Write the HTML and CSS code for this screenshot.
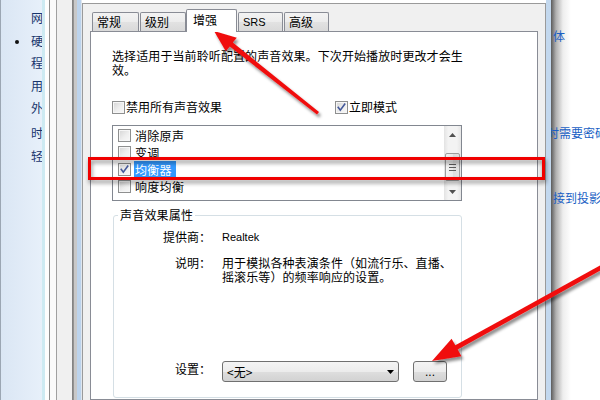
FILE: index.html
```html
<!DOCTYPE html>
<html lang="zh-CN">
<head>
<meta charset="utf-8">
<title>声音属性 - 增强</title>
<link rel="stylesheet" href="styles.css">
</head>
<body>
<div class="screen">
  <aside class="sidebar">
    <ul class="nav">
      <li>网络和 Internet</li>
      <li class="current">硬件和声音</li>
      <li>程序</li>
      <li>用户帐户和家庭安全</li>
      <li>外观和个性化</li>
      <li class="gap">时钟、语言和区域</li>
      <li>轻松访问</li>
    </ul>
  </aside>
  <div class="chrome-left"></div>
  <section class="dialog">
    <div class="tabs">
      <div class="tab t1">常规</div>
      <div class="tab t2">级别</div>
      <div class="tab active">增强</div>
      <div class="tab t4 latin">SRS</div>
      <div class="tab t5">高级</div>
    </div>
    <div class="panel">
      <p class="intro">选择适用于当前聆听配置的声音效果。下次开始播放时更改才会生<br>效。</p>
      <div class="checks">
        <label class="check"><span class="box"></span>禁用所有声音效果</label>
        <label class="check"><span class="box"><svg class="tick" viewBox="0 0 11 11" width="11" height="11"><path d="M1.8 4.8 L4.3 8.2 L9.2 1.6" fill="none" stroke="#43589a" stroke-width="1.6"/></svg></span>立即模式</label>
      </div>
      <div class="listbox">
        <ul class="items">
          <li><span class="box"></span><span class="label">消除原声</span></li>
          <li><span class="box"></span><span class="label">变调</span></li>
          <li class="selected"><span class="box"><svg class="tick" viewBox="0 0 11 11" width="11" height="11"><path d="M1.8 4.8 L4.3 8.2 L9.2 1.6" fill="none" stroke="#43589a" stroke-width="1.6"/></svg></span><span class="label">均衡器</span></li>
          <li><span class="box"></span><span class="label">响度均衡</span></li>
        </ul>
        <div class="scrollbar">
          <div class="sb-btn"><svg width="7" height="4" viewBox="0 0 7 4"><path d="M0 4 L3.5 0 L7 4Z" fill="#505050"/></svg></div>
          <div class="sb-track">
            <div class="sb-thumb"><svg width="7" height="7" viewBox="0 0 7 7"><rect x="0" y="0" width="7" height="1" fill="#5c5c5c"/><rect x="0" y="3" width="7" height="1" fill="#5c5c5c"/><rect x="0" y="6" width="7" height="1" fill="#5c5c5c"/></svg></div>
          </div>
          <div class="sb-btn"><svg width="7" height="4" viewBox="0 0 7 4"><path d="M0 0 L7 0 L3.5 4Z" fill="#505050"/></svg></div>
        </div>
      </div>
      <fieldset class="group">
        <legend>声音效果属性</legend>
        <div class="prop">
          <span class="key">提供商：</span>
          <span class="val latin">Realtek</span>
        </div>
        <div class="prop desc">
          <span class="key">说明：</span>
          <span class="val">用于模拟各种表演条件（如流行乐、直播、摇滚乐等）的频率响应的设置。</span>
        </div>
        <div class="prop setting">
          <span class="key">设置：</span>
          <div class="controls">
            <div class="combo"><span>&lt;无&gt;</span><svg width="7" height="4" viewBox="0 0 7 4"><path d="M0 0 L7 0 L3.5 4Z" fill="#000"/></svg></div>
            <button class="more latin" type="button">...</button>
          </div>
        </div>
      </fieldset>
    </div>
  </section>
  <div class="chrome-right"></div>
  <div class="page">
    <span class="link l1">体</span>
    <span class="link l2">时需要密码</span>
    <span class="link l3">接到投影仪</span>
  </div>
  <div class="highlight"></div>
  <svg class="arrows" width="600" height="400" viewBox="0 0 600 400">
    <defs>
      <filter id="sh" x="-20%" y="-20%" width="140%" height="140%">
        <feDropShadow dx="2" dy="3" stdDeviation="1.6" flood-color="#000" flood-opacity="0.45"/>
      </filter>
    </defs>
    <polygon filter="url(#sh)" fill="#f01010" points="319,112 232.8,42.6 236.8,37.8 214,31 225.8,51.3 229.8,46.6 317,114.5"/>
    <polygon filter="url(#sh)" fill="#f01010" points="611,264.5 457.7,349.6 461.4,356.2 432,361 451.6,338.8 455.3,345.3 609,260.5"/>
  </svg>
</div>
</body>
</html>
```

FILE: styles.css
```css
* { box-sizing: border-box; }
html, body { margin: 0; padding: 0; }
body {
  width: 600px;
  height: 400px;
  overflow: hidden;
  background: #fff;
  font-family: "Noto Sans CJK SC", "Noto Sans", sans-serif;
  font-size: 12px;
  color: #000;
}
.latin { font-family: "Liberation Sans", Arial, sans-serif; }

.screen {
  position: relative;
  display: flex;
  width: 600px;
  height: 400px;
  overflow: hidden;
  background: #fff;
}

/* left control panel pane */
.sidebar {
  flex: none;
  width: 42px;
  overflow: hidden;
  border-left: 1px solid #9ba6b3;
  background: linear-gradient(to right, #dae6f4, #e7f0fa);
}
.nav {
  list-style: none;
  margin: 0;
  padding: 7px 0 0 30px;
  white-space: nowrap;
  color: #17356c;
  line-height: 22.5px;
}
.nav .current::before {
  content: "";
  display: inline-block;
  width: 4px;
  height: 4px;
  border-radius: 50%;
  background: #111;
  margin-left: -16px;
  margin-right: 12px;
  vertical-align: middle;
}
.nav .gap { margin-top: 2.5px; }

.chrome-left {
  flex: none;
  width: 40px;
  background: linear-gradient(to right,
    #cdeaf2 0, #cdeaf2 3px,
    #fdfdfd 3px, #fdfdfd 7px,
    #8d8d8d 7px, #8d8d8d 8px,
    #fafafa 8px, #fafafa 14px,
    #a0a0a0 14px, #a0a0a0 15px,
    #f0f0f0 15px, #f0f0f0 30px,
    #7c7c7c 30px, #9a9a9a 32px,
    #c8c8c8 32px, #c8c8c8 35px,
    #bcd3ec 35px, #bcd3ec 39px,
    #dfe6ee 39px, #dfe6ee 40px);
}

/* dialog */
.dialog {
  flex: none;
  width: 464px;
  margin-top: 3px;
  border: 1px solid #9a9a9a;
  border-bottom: 0;
  background: #f0f0f0;
  padding: 5px 7px 0;
  display: flex;
  flex-direction: column;
}
.tabs {
  position: relative;
  z-index: 1;
  display: flex;
  align-items: flex-end;
  height: 22px;
  padding-left: 2px;
}
.tab {
  flex: none;
  height: 19px;
  margin-right: 1px;
  padding-left: 4px;
  line-height: 18px;
  border: 1px solid #898c95;
  border-bottom: 0;
  border-radius: 2px 2px 0 0;
  background: linear-gradient(#f3f3f3, #ececec 50%, #e2e2e2 51%, #d9d9d9);
  white-space: nowrap;
  overflow: hidden;
}
.t1 { width: 47px; }
.t2 { width: 46px; }
.t4 { width: 45px; font-size: 11px; }
.t5 { width: 45px; }
.tab.active {
  width: 51px;
  height: 23px;
  margin-left: -1px;
  margin-bottom: -1px;
  padding-left: 6px;
  line-height: 20px;
  background: #fff;
}

.panel {
  flex: 1;
  background: #fff;
  border: 1px solid #898c95;
  padding: 17px 0 0 21px;
}
.intro {
  margin: 0;
  width: 400px;
  line-height: 14px;
  letter-spacing: 0.1px;
  white-space: nowrap;
}

.checks {
  display: grid;
  grid-template-columns: 223px auto;
  margin-top: 22px;
  height: 16px;
  align-items: center;
}
.check {
  display: flex;
  align-items: center;
  line-height: 16px;
}
.box {
  flex: none;
  display: flex;
  align-items: center;
  justify-content: center;
  width: 13px;
  height: 13px;
  margin-right: 1px;
  border: 1px solid #8e8f8f;
  background: linear-gradient(135deg, #d4d4d4 0%, #eeeeee 55%, #f8f8f8 100%);
  box-shadow: inset 0 0 0 1px #f6f6f6;
}

.listbox {
  margin-top: 10px;
  width: 350px;
  height: 76px;
  border: 1px solid #828790;
  display: flex;
}
.items {
  flex: 1;
  list-style: none;
  margin: 0;
  padding: 1px 0 0 5px;
}
.items li {
  display: flex;
  align-items: center;
  height: 17px;
}
.items .box { margin-right: 3px; }
.items .label {
  padding: 0 4px 0 1px;
  line-height: 17px;
  letter-spacing: 0.3px;
}
.items .selected .label { background: #3399ff; color: #fff; }

.scrollbar {
  flex: none;
  width: 17px;
  display: flex;
  flex-direction: column;
  background: linear-gradient(to right, #e3e3e3, #f3f3f3 25%, #f3f3f3 75%, #e6e6e6);
}
.sb-btn {
  height: 17px;
  display: flex;
  align-items: center;
  justify-content: center;
}
.sb-track { flex: 1; padding-top: 10px; }
.sb-thumb {
  height: 28px;
  margin: 0 1px;
  border: 1px solid #9d9d9d;
  border-radius: 2px;
  background: linear-gradient(to right, #f4f4f4, #e9e9e9 50%, #dcdcdc 51%, #e2e2e2);
  display: flex;
  align-items: center;
  justify-content: center;
}

.group {
  margin: 7px 0 0 1px;
  width: 349px;
  min-width: 0;
  height: 190px;
  border: 1px solid #d5dfe5;
  border-radius: 3px;
  padding: 8px 0 0 4px;
}
.group legend {
  margin: 0;
  padding: 0 2px;
  line-height: 14px;
  letter-spacing: 0.2px;
}
.prop {
  display: grid;
  grid-template-columns: 93px 238px;
  column-gap: 11px;
  line-height: 14px;
  align-items: start;
}
.key { text-align: right; }
.val { letter-spacing: 0.1px; }
.val.latin { font-size: 11px; letter-spacing: 0; }
.desc { margin-top: 12px; }
.setting { margin-top: 77px; }
.setting .key { margin-top: 1px; }
.controls { display: flex; }
.combo {
  width: 177px;
  height: 21px;
  border: 1px solid #707070;
  border-radius: 3px;
  background: linear-gradient(#f4f4f4, #ececec 50%, #dedede 51%, #d2d2d2);
  display: flex;
  align-items: center;
  justify-content: space-between;
  padding: 0 4px 0 4px;
}
.more {
  width: 34px;
  height: 21px;
  margin: 0 0 0 14px;
  padding: 0;
  border: 1px solid #707070;
  border-radius: 3px;
  background: linear-gradient(#f4f4f4, #ececec 50%, #dedede 51%, #d2d2d2);
  font-size: 12px;
  color: #000;
  line-height: 18px;
}

.chrome-right {
  flex: none;
  width: 5px;
  background: #c3d8ee;
}
.page {
  flex: none;
  width: 49px;
  overflow: hidden;
  white-space: nowrap;
  color: #1a5fc4;
  padding-left: 1px;
  background: linear-gradient(to right, rgba(50,50,50,.8) 0, rgba(80,80,80,.45) 5px, rgba(140,140,140,.15) 12px, rgba(255,255,255,0) 20px), #fff;
}
.link { display: block; line-height: 14px; }
.l1 { margin-top: 29px; padding-left: 1px; }
.l2 { margin-top: 83px; margin-left: -5px; }
.l3 { margin-top: 51px; padding-left: 1px; }

/* annotations drawn over the screenshot */
.highlight {
  position: absolute;
  left: 88px;
  top: 157px;
  width: 457px;
  height: 23px;
  border: 3px solid #f00000;
  filter: drop-shadow(1px 3px 2px rgba(0,0,0,.45));
}
.arrows {
  position: absolute;
  left: 0;
  top: 0;
  pointer-events: none;
}
```
